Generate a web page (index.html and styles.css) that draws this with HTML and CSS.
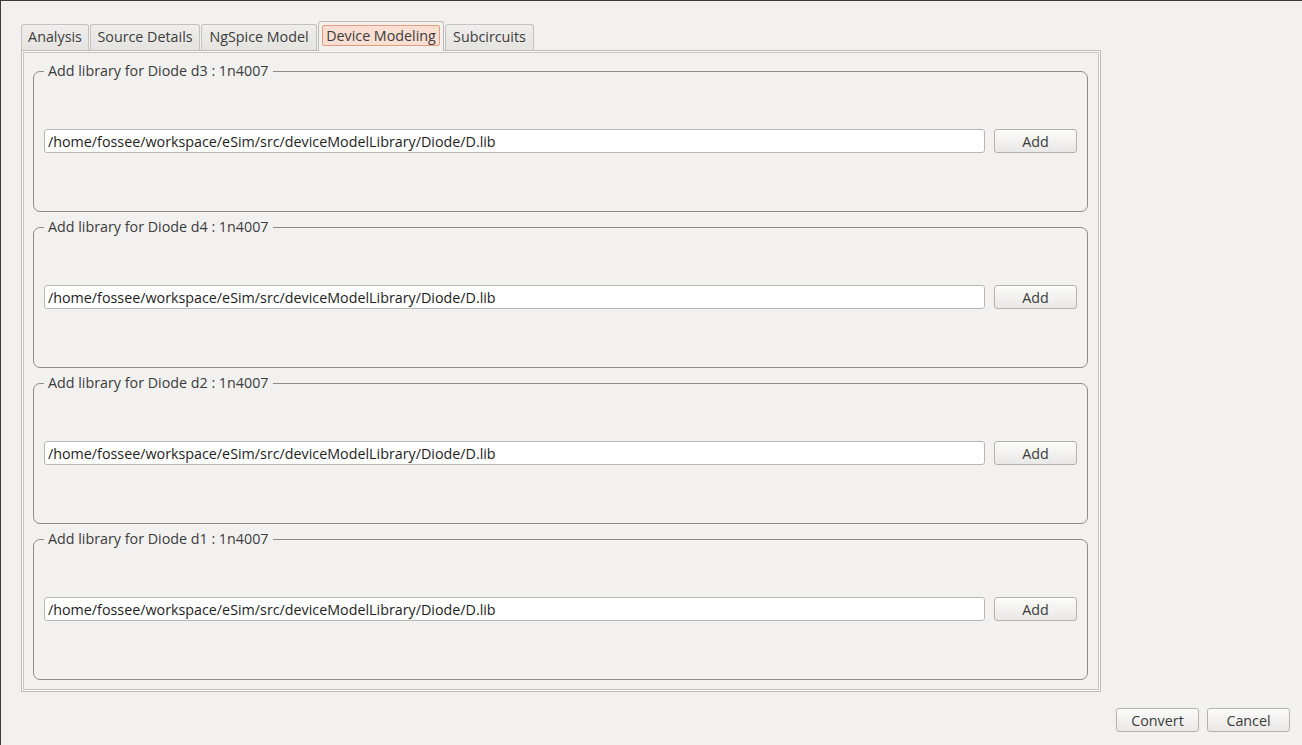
FILE: index.html
```html
<!DOCTYPE html>
<html>
<head>
<meta charset="utf-8">
<title>Device Modeling</title>
<link rel="stylesheet" href="styles.css">
</head>
<body>
<div class="window">
  <div class="tabs">
    <div class="tab t1">Analysis</div>
    <div class="tab t2">Source Details</div>
    <div class="tab t3">NgSpice Model</div>
    <div class="tab t4 active"><span class="focus">Device Modeling</span></div>
    <div class="tab t5">Subcircuits</div>
  </div>
  <div class="pane">
    <fieldset class="group">
      <legend>Add library for Diode d3 : 1n4007</legend>
      <div class="row">
        <input class="path" type="text" value="/home/fossee/workspace/eSim/src/deviceModelLibrary/Diode/D.lib">
        <button class="btn add">Add</button>
      </div>
    </fieldset>
    <fieldset class="group">
      <legend>Add library for Diode d4 : 1n4007</legend>
      <div class="row">
        <input class="path" type="text" value="/home/fossee/workspace/eSim/src/deviceModelLibrary/Diode/D.lib">
        <button class="btn add">Add</button>
      </div>
    </fieldset>
    <fieldset class="group">
      <legend>Add library for Diode d2 : 1n4007</legend>
      <div class="row">
        <input class="path" type="text" value="/home/fossee/workspace/eSim/src/deviceModelLibrary/Diode/D.lib">
        <button class="btn add">Add</button>
      </div>
    </fieldset>
    <fieldset class="group">
      <legend>Add library for Diode d1 : 1n4007</legend>
      <div class="row">
        <input class="path" type="text" value="/home/fossee/workspace/eSim/src/deviceModelLibrary/Diode/D.lib">
        <button class="btn add">Add</button>
      </div>
    </fieldset>
  </div>
  <div class="actions">
    <button class="btn action">Convert</button>
    <button class="btn action">Cancel</button>
  </div>
</div>
</body>
</html>
```
FILE: styles.css
```css
* { box-sizing: border-box; }
html, body {
  margin: 0;
  padding: 0;
  width: 1302px;
  height: 745px;
  overflow: hidden;
  background: #f2f1f0;
}
body {
  font-family: "Open Sans", "DejaVu Sans", sans-serif;
  font-size: 14.3px;
  color: #3c3c3c;
}
.window {
  height: 745px;
  border-top: 1px solid #3c3b37;
  border-left: 1px solid #3c3b37;
  padding: 20px 0 0 20px;
  display: flex;
  flex-direction: column;
}
.tabs {
  display: flex;
  align-items: flex-end;
  height: 29px;
}
.tab {
  height: 26px;
  border: 1px solid #c4c2be;
  border-bottom: none;
  border-radius: 3px 3px 0 0;
  background: linear-gradient(#efeeec, #e4e3e0);
  display: flex;
  align-items: center;
  justify-content: center;
  margin-right: 1px;
  line-height: 18px;
  padding-bottom: 2px;
}
.t1 { width: 68px; }
.t2 { width: 110px; }
.t3 { width: 116px; }
.t4 { width: 126px; }
.t5 { width: 89px; }
.tab.active {
  background: #f2f1f0;
  border-color: #bdbbb7;
  margin-bottom: -1px;
  position: relative;
  z-index: 1;
  height: 30px;
  padding-bottom: 2px;
}
.focus {
  display: block;
  width: 118px;
  height: 21px;
  line-height: 19px;
  text-align: center;
  background: #fadfd2;
  border: 1px solid #eb9b7b;
  border-radius: 2px;
}
.pane {
  width: 1080px;
  height: 642px;
  border: 1px solid #bebcb8;
  box-shadow: inset 0 0 0 1px #faf9f8, inset 0 0 0 2px #c9c7c3;
  padding: 11px 12px 0 11px;
  display: flex;
  flex-direction: column;
  gap: 6px;
}
.group {
  margin: 0;
  padding: 0 10px 9px 10px;
  border: 1px solid #8e8c88;
  border-radius: 7px;
  min-width: 0;
}
.group legend {
  padding: 0 4px;
  margin: 0;
  line-height: 18px;
  height: 18px;
}
.row {
  height: 122px;
  display: flex;
  align-items: center;
  gap: 9px;
}
.path {
  flex: 1;
  height: 24px;
  border: 1px solid #b9b7b3;
  border-radius: 3px;
  background: #ffffff;
  font: inherit;
  color: #1e1e1e;
  padding: 0 3px;
  outline: none;
}
.btn {
  font: inherit;
  color: #3c3c3c;
  height: 24px;
  border: 1px solid #b4b2ae;
  border-radius: 3px;
  background: linear-gradient(#fbfbfa, #e9e8e6);
  padding: 0;
  box-shadow: inset 0 1px 0 #ffffff;
}
.add { width: 83px; }
.actions {
  display: flex;
  justify-content: flex-end;
  gap: 8px;
  padding-right: 12px;
  margin-top: 16px;
}
.action { width: 83px; }
```
